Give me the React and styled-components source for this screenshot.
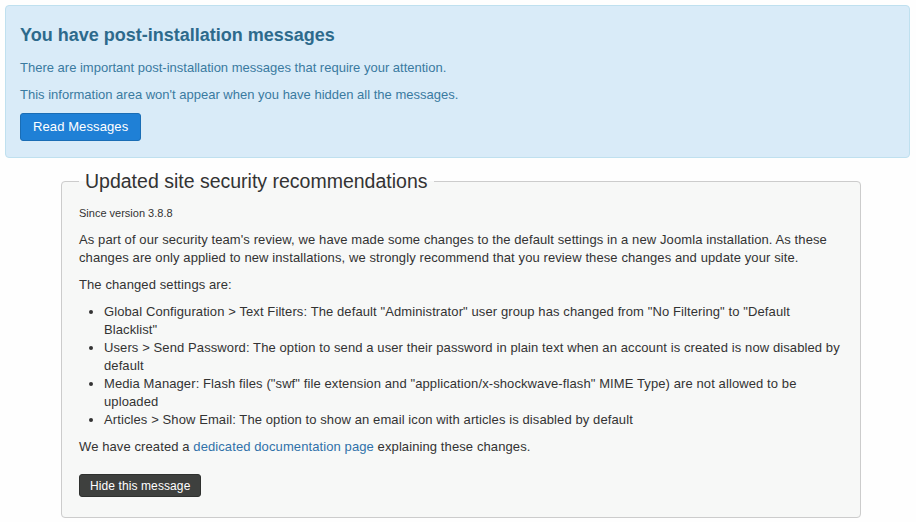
import React from "react";
import styled, { createGlobalStyle } from "styled-components";

const GlobalStyle = createGlobalStyle`
  body {
    margin: 0;
    background: #fefefe;
    font-family: "Liberation Sans", Arial, sans-serif;
    font-size: 13px;
    line-height: 18px;
    color: #333;
  }
`;

const Page = styled.div`
  padding: 5px 6px 5px 5px;
`;

const Alert = styled.div`
  background-color: #d9ebf8;
  border: 1px solid #bfe0ef;
  border-radius: 4px;
  color: #3a7aa0;
  padding: 14px 14px 16px 14px;
`;

const AlertHeading = styled.h2`
  margin: 4px 0 13px;
  font-size: 18px;
  line-height: 22px;
  font-weight: bold;
  color: #2d6a8c;
`;

const Text = styled.p`
  margin: 0 0 9px;
`;

const Button = styled.button`
  font-family: "Liberation Sans", Arial, sans-serif;
  display: inline-block;
  box-sizing: border-box;
  border-radius: 3px;
  cursor: pointer;
  color: #fff;
  letter-spacing: 0.1px;
  background: ${(p) => (p.$dark ? "#3e403e" : "#1f80d6")};
  border: 1px solid ${(p) => (p.$dark ? "#2f312f" : "#1a6db5")};
  font-size: ${(p) => (p.$small ? "12px" : "13px")};
  line-height: 18px;
  padding: ${(p) => (p.$small ? "2px 10px" : "4px 12px")};
  height: ${(p) => (p.$small ? "23px" : "28px")};
`;

const Fieldset = styled.fieldset`
  margin: 11px 0 0 56px;
  width: 800px;
  box-sizing: border-box;
  background: #f7f8f7;
  border: 1px solid #ccc;
  border-radius: 4px;
  padding: 11px 17px 20px 17px;
  letter-spacing: 0.1px;
`;

const Legend = styled.legend`
  font-size: 19.5px;
  line-height: 24px;
  letter-spacing: 0;
  color: #333;
  padding: 0 6px;
  margin-left: 0;
`;

const Small = styled.p`
  margin: 0 0 9px;
  font-size: 11px;
  letter-spacing: 0;
`;

const List = styled.ul`
  margin: 0 0 9px 25px;
  padding: 0;
`;

const Link = styled.a`
  color: #3071a9;
  text-decoration: none;
`;

const Actions = styled.div`
  padding-top: 9px;
`;

export default function App() {
  return (
    <Page>
      <GlobalStyle />
      <Alert>
        <AlertHeading>You have post-installation messages</AlertHeading>
        <Text>There are important post-installation messages that require your attention.</Text>
        <Text>This information area won't appear when you have hidden all the messages.</Text>
        <Button>Read Messages</Button>
      </Alert>
      <Fieldset>
        <Legend>Updated site security recommendations</Legend>
        <Small>Since version 3.8.8</Small>
        <Text>
          As part of our security team's review, we have made some changes to the default settings in a new
          Joomla installation. As these changes are only applied to new installations, we strongly recommend
          that you review these changes and update your site.
        </Text>
        <Text>The changed settings are:</Text>
        <List>
          <li>
            Global Configuration &gt; Text Filters: The default "Administrator" user group has changed from "No
            Filtering" to "Default Blacklist"
          </li>
          <li>
            Users &gt; Send Password: The option to send a user their password in plain text when an account is
            created is now disabled by default
          </li>
          <li>
            Media Manager: Flash files ("swf" file extension and "application/x-shockwave-flash" MIME Type) are
            not allowed to be uploaded
          </li>
          <li>Articles &gt; Show Email: The option to show an email icon with articles is disabled by default</li>
        </List>
        <Text>
          We have created a <Link href="#">dedicated documentation page</Link> explaining these changes.
        </Text>
        <Actions>
          <Button $dark $small>Hide this message</Button>
        </Actions>
      </Fieldset>
    </Page>
  );
}
